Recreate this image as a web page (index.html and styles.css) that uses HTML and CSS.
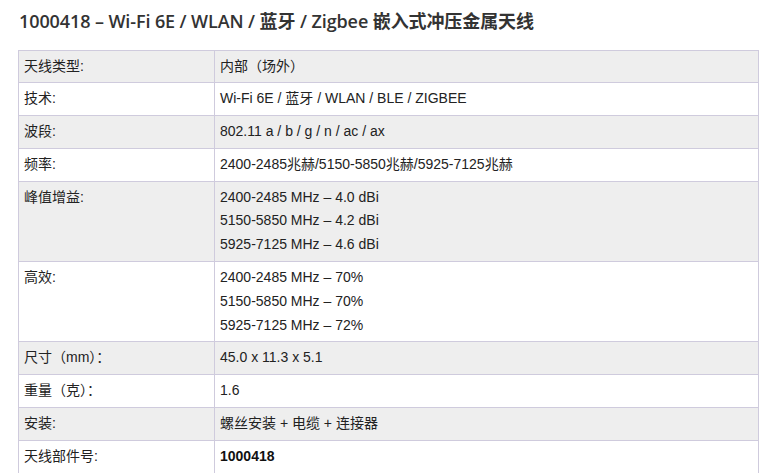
FILE: index.html
```html
<!DOCTYPE html>
<html>
<head>
<meta charset="utf-8">
<link rel="stylesheet" href="styles.css">
</head>
<body>
<div class="page">
  <h2 class="title">1000418 – Wi-Fi 6E / WLAN / 蓝牙 / Zigbee 嵌入式冲压金属天线</h2>
  <table class="spec">
    <tbody>
      <tr><td class="k">天线类型:</td><td class="v">内部（场外）</td></tr>
      <tr><td class="k">技术:</td><td class="v">Wi-Fi 6E / 蓝牙 / WLAN / BLE / ZIGBEE</td></tr>
      <tr><td class="k">波段:</td><td class="v">802.11 a / b / g / n / ac / ax</td></tr>
      <tr><td class="k">频率:</td><td class="v">2400-2485兆赫/5150-5850兆赫/5925-7125兆赫</td></tr>
      <tr><td class="k">峰值增益:</td><td class="v">2400-2485 MHz – 4.0 dBi<br>5150-5850 MHz – 4.2 dBi<br>5925-7125 MHz – 4.6 dBi</td></tr>
      <tr><td class="k">高效:</td><td class="v">2400-2485 MHz – 70%<br>5150-5850 MHz – 70%<br>5925-7125 MHz – 72%</td></tr>
      <tr><td class="k">尺寸（mm）：</td><td class="v">45.0 x 11.3 x 5.1</td></tr>
      <tr><td class="k">重量（克）：</td><td class="v">1.6</td></tr>
      <tr><td class="k">安装:</td><td class="v">螺丝安装 + 电缆 + 连接器</td></tr>
      <tr><td class="k">天线部件号:</td><td class="v"><strong>1000418</strong></td></tr>
    </tbody>
  </table>
</div>
</body>
</html>
```
FILE: styles.css
```css
html, body {
  margin: 0;
  padding: 0;
  background: #ffffff;
}
.page {
  padding: 0 5px 0 18px;
}
.title {
  margin: 0;
  padding: 9px 0 0 1px;
  height: 49.5px;
  box-sizing: border-box;
  font-family: "Open Sans", "Noto Sans CJK SC", sans-serif;
  font-weight: 600;
  font-size: 18px;
  line-height: 24px;
  color: #333333;
  letter-spacing: -0.1px;
}
.spec {
  width: 741px;
  border-collapse: collapse;
  font-family: "Liberation Sans", Arial, "Noto Sans CJK SC", sans-serif;
  font-size: 14px;
  line-height: 1.7;
  color: #222222;
}
.spec td {
  border: 1px solid #cfcbdd;
  padding: 4px 5px;
  vertical-align: top;
}
.spec tr:nth-child(odd) td {
  background: #eeeeee;
}
.spec td.k {
  width: 185px;
}
.spec strong {
  font-weight: 700;
  color: #111111;
}
```
